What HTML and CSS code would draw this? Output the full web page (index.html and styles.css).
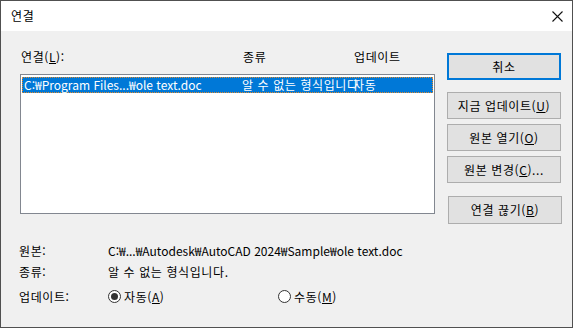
FILE: index.html
```html
<!DOCTYPE html>
<html lang="ko">
<head>
<meta charset="utf-8">
<title>연결</title>
<link rel="stylesheet" href="styles.css">
</head>
<body>
<div class="window">
  <div class="titlebar">
    <span class="title ko">연결</span>
    <svg class="close" width="11" height="11" viewBox="0 0 11 11"><path d="M0.5 0.5 L10.5 10.5 M10.5 0.5 L0.5 10.5" stroke="#111" stroke-width="1.1" fill="none"/></svg>
  </div>
  <div class="body">
    <div class="main">
      <div class="left">
        <div class="cols head">
          <span class="ko">연결(<u>L</u>):</span><span class="ko">종류</span><span class="ko">업데이트</span>
        </div>
        <div class="listbox">
          <div class="cols row selected">
            <span>C:₩Program Files...₩ole text.doc</span><span class="ko">알 수 없는 형식입니다</span><span class="ko">자동</span>
          </div>
        </div>
      </div>
      <div class="buttons">
        <button class="btn default ko">취소</button>
        <button class="btn first ko">지금 업데이트(<u>U</u>)</button>
        <button class="btn ko">원본 열기(<u>O</u>)</button>
        <button class="btn ko">원본 변경(<u>C</u>)...</button>
        <button class="btn last ko">연결 끊기(<u>B</u>)</button>
      </div>
    </div>
    <div class="info">
      <span class="lbl ko">원본:</span><span>C:₩...₩Autodesk₩AutoCAD 2024₩Sample₩ole text.doc</span>
      <span class="lbl ko">종류:</span><span class="ko">알 수 없는 형식입니다.</span>
      <span class="lbl upd ko">업데이트:</span>
      <span class="radios">
        <label class="radio ko"><span class="dot checked"></span>자동(<u>A</u>)</label>
        <label class="radio ko"><span class="dot"></span>수동(<u>M</u>)</label>
      </span>
    </div>
  </div>
</div>
</body>
</html>
```

FILE: styles.css
```css
* { box-sizing: border-box; }
html, body { margin: 0; padding: 0; }
body {
  font-family: "Noto Sans CJK KR", "Noto Sans", sans-serif;
  font-size: 12px;
  color: #000;
  background: #f0f0f0;
}
.ko { letter-spacing: 0.6px; }
.window {
  width: 573px;
  height: 328px;
  border: 1px solid #505050;
  background: #f0f0f0;
  display: flex;
  flex-direction: column;
}
.titlebar {
  height: 30px;
  background: #fff;
  display: flex;
  align-items: center;
  justify-content: space-between;
  padding: 0 9px 0 10px;
}
.title { line-height: 16px; }
.close { display: block; margin-top: 1px; }
.body { flex: 1; padding: 18px 0 0 19px; }
.main { display: flex; gap: 12px; align-items: flex-start; }
.left { width: 415px; }
.cols {
  display: grid;
  white-space: nowrap;
}
.head {
  grid-template-columns: 222px 111px auto;
  padding-left: 1px;
  height: 25px;
  line-height: 16px;
}
.listbox {
  height: 140px;
  background: #fff;
  border: 1px solid #828790;
  padding: 2px 1px;
}
.row {
  grid-template-columns: 218px 111px auto;
  height: 16px;
  line-height: 14px;
  padding-left: 1px;
  background: #0078d7;
  color: #fff;
  border: 1px dotted #e08a2e;
}
.row span { overflow: visible; }
.buttons {
  margin-top: 4px;
  display: flex;
  flex-direction: column;
  gap: 5px;
  width: 114px;
}
.btn {
  font: inherit;
  color: #000;
  height: 27px;
  width: 114px;
  background: #e1e1e1;
  border: 1px solid #adadad;
  padding: 0;
  line-height: 16px;
}
.btn.default { border: 2px solid #0078d7; }
.btn.first { margin-top: 7px; }
.btn.last { margin-top: 8px; margin-left: 1px; height: 28px; }
.info {
  margin-top: 16px;
  display: grid;
  grid-template-columns: 89px auto;
  grid-auto-rows: 21px;
  align-items: center;
  margin-left: -1px;
  white-space: nowrap;
}
.info .upd, .info .radios { margin-top: 7px; }
.radios { display: flex; }
.radio { display: flex; align-items: center; width: 170px; }
.dot {
  width: 13px;
  height: 13px;
  border: 1px solid #333;
  border-radius: 50%;
  background: #fff;
  margin-right: 3px;
  display: flex;
  align-items: center;
  justify-content: center;
}
.dot.checked::after {
  content: "";
  width: 7px;
  height: 7px;
  border-radius: 50%;
  background: #333;
}
u { text-decoration-thickness: 1px; text-underline-offset: 1px; }
```
